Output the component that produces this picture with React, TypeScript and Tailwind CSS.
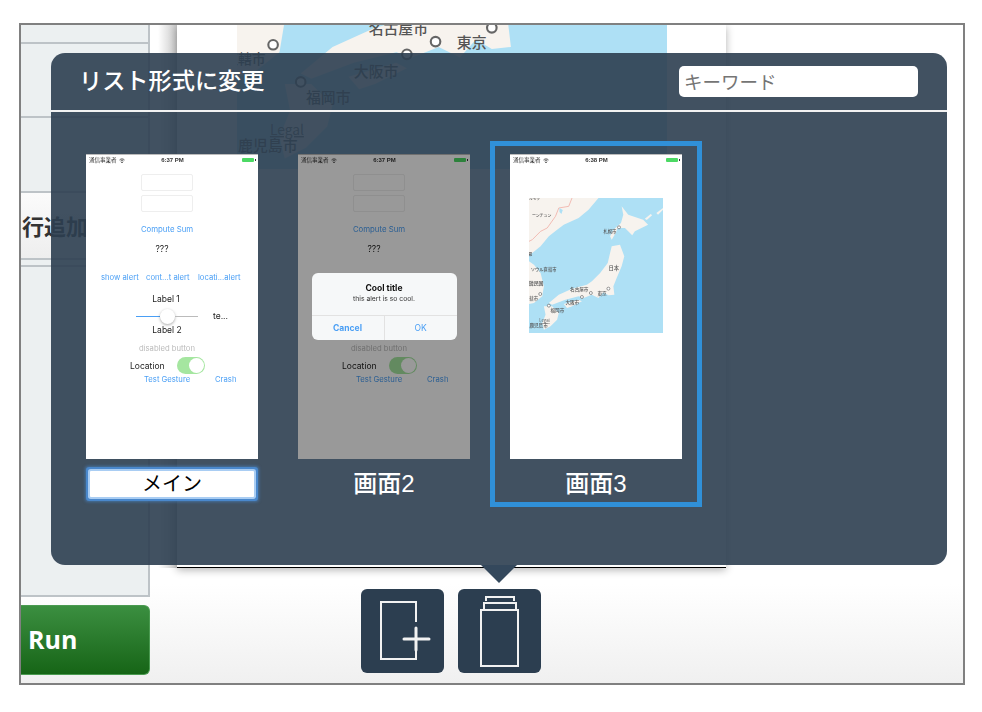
import React from 'react';

const LAND = [
  '0,0 210,0 180,35 150,60 105,80 85,95 60,115 35,145 10,165 0,170',
  '0,190 15,200 35,225 45,265 40,295 15,315 0,318',
  '280,25 300,50 345,65 360,80 320,100 312,112 290,90 268,90 262,105 250,125 245,115 255,95 278,75 285,50',
  '250,145 275,140 288,175 280,205 265,240 255,265 258,290 240,292 225,283 210,300 190,290 165,300 150,295 110,305 70,320 60,315 90,290 130,272 175,260 190,250 215,225 238,195 245,165',
  '105,318 150,305 160,310 130,325 115,330',
  '45,325 70,325 90,345 85,365 65,385 45,395 40,375 50,350',
  '385,45 405,30 405,35 390,50',
  '350,62 368,48 372,52 356,66',
];

const MARKERS = [
  [272, 88],
  [240, 272],
  [187, 285],
  [160, 297],
  [60, 323],
  [34, 288],
];

const LABELS: [string, number, number, number, 'start' | 'end'][] = [
  ['ルモラ', 0, 6, 11, 'start'],
  ['ーンチュン', 68, 58, 12, 'end'],
  ['羅', 10, 175, 12, 'end'],
  ['札幌市', 225, 106, 13, 'start'],
  ['日本', 240, 217, 16, 'start'],
  ['ソウル直轄市', 83, 220, 13, 'end'],
  ['大韓民国', 44, 262, 15, 'end'],
  ['釜山直轄市', 27, 306, 13, 'end'],
  ['東京', 207, 291, 14, 'start'],
  ['名古屋市', 124, 278, 14, 'start'],
  ['大阪市', 110, 318, 14, 'start'],
  ['福岡市', 65, 343, 14, 'start'],
  ['鹿児島市', 57, 388, 14, 'end'],
];

function JapanMap({ className }: { className: string }) {
  return (
    <svg viewBox="0 0 405 405" preserveAspectRatio="none" className={className}>
      <rect width="405" height="405" fill="#aee0f5" />
      {LAND.map((points) => (
        <polygon key={points} points={points} fill="#f7f3ee" />
      ))}
      <polyline
        points="130,0 120,25 90,30 80,55 55,90 35,100 10,125 0,130"
        fill="none"
        stroke="#f0b0a8"
        strokeWidth="2.5"
      />
      <polygon points="92,30 102,36 98,48 92,42" fill="#aee0f5" />
      {LABELS.map(([label, x, y, size, anchor]) => (
        <text key={label} x={x} y={y} fontSize={size} fontWeight="500" textAnchor={anchor} fill="#555">
          {label}
        </text>
      ))}
      <text x="31" y="373" fontSize="13" fill="#666" textDecoration="underline">
        Legal
      </text>
      {MARKERS.map(([x, y]) => (
        <circle key={x} cx={x} cy={y} r="4.5" fill="#fff" stroke="#666" strokeWidth="2" />
      ))}
    </svg>
  );
}

function StatusBar({ time }: { time: string }) {
  return (
    <div className="h-[11px] flex items-center justify-between pl-[3px] pr-[2px] border-t border-[#bbb] text-[5.5px] text-[#333]">
      <div className="flex items-center gap-[2px] w-[60px]">
        <span>通信事業者</span>
        <svg width="6" height="5" viewBox="0 0 12 10" fill="none" stroke="#333" strokeWidth="1.6">
          <path d="M1 4c3-3 7-3 10 0M3 6c2-2 4-2 6 0" />
          <circle cx="6" cy="8.5" r="0.8" fill="#333" />
        </svg>
      </div>
      <span className="text-[6px] font-semibold">{time}</span>
      <div className="flex items-center justify-end gap-[1px] w-[60px]">
        <div className="w-[12px] h-[4px] bg-[#4cd964] rounded-[1px]" />
        <div className="w-[1px] h-[2px] bg-[#333]" />
      </div>
    </div>
  );
}

function MainScreen() {
  const blue = 'text-[#4a9ff5]';
  return (
    <div className="font-['Inter','Noto_Sans_CJK_JP',sans-serif] text-[#222] leading-none whitespace-nowrap">
      <div className="h-[9px]" />
      <div className="h-[17px] w-[52px] ml-[55px] border border-[#eee] rounded-[2px]" />
      <div className="h-[17px] w-[52px] ml-[55px] mt-[4px] border border-[#eee] rounded-[2px]" />
      <div className={`h-[11px] w-[52px] ml-[55px] mt-[12px] pt-[1px] flex items-center justify-center text-[7.8px] ${blue}`}>Compute Sum</div>
      <div className="h-[11px] w-[52px] ml-[50px] mt-[9px] flex items-center justify-center text-[8.5px]">???</div>
      <div className={`h-[10px] mt-[18px] ml-[15px] flex items-center gap-[7px] text-[7.7px] ${blue}`}>
        <span className="w-[38px]">show alert</span>
        <span className="w-[45px]">cont...t alert</span>
        <span>locati...alert</span>
      </div>
      <div className="h-[11px] w-[52px] ml-[54px] mt-[11px] flex items-center justify-center text-[8.5px]">Label 1</div>
      <div className="h-[15px] mt-[4px] ml-[50px] flex items-center">
        <div className="w-[24px] h-[1px] bg-[#4a9ff5]" />
        <div className="w-[15px] h-[15px] rounded-full bg-white shadow-[0_1px_3px_rgba(0,0,0,0.35)]" />
        <div className="w-[23px] h-[1px] bg-[#bbb]" />
        <span className="ml-[15px] text-[8.5px]">te...</span>
      </div>
      <div className="h-[11px] w-[52px] ml-[55px] pt-[1px] flex items-center justify-center text-[8.5px]">Label 2</div>
      <div className="h-[10px] w-[60px] ml-[51px] mt-[9px] flex items-center justify-center text-[7.7px] text-[#bbb]">disabled button</div>
      <div className="h-[17px] mt-[3px] ml-[44px] flex items-center text-[8.5px]">
        <span className="w-[47px] pt-[1px]">Location</span>
        <div className="w-[28px] h-[17px] rounded-full bg-[#a5e6a0] flex justify-end items-center pr-[1px]">
          <div className="w-[15px] h-[15px] rounded-full bg-white" />
        </div>
      </div>
      <div className={`h-[10px] ml-[58px] pt-[1px] flex items-center text-[7.7px] ${blue}`}>
        <span className="w-[71px]">Test Gesture</span>
        <span>Crash</span>
      </div>
    </div>
  );
}

function Thumb({ children, label, selected, focused }: { children: React.ReactNode; label: string; selected?: boolean; focused?: boolean }) {
  return (
    <div className={`w-[212px] h-[366px] border-[5px] px-[15px] pt-[8px] ${selected ? 'border-[#3090d8]' : 'border-transparent'}`}>
      <div className="relative w-[172px] h-[305px] bg-white overflow-hidden blur-[0.4px]">{children}</div>
      <div className="h-[32px] mt-[9px] flex items-center justify-center">
        {focused ? (
          <div className="w-[164px] h-[26px] bg-white flex items-center justify-center text-[20px] text-black rounded-[1px] shadow-[0_0_0_2px_#a9cdf3,0_0_0_4px_#4a88cc,0_0_3px_5px_rgba(74,136,204,0.6)]">
            {label}
          </div>
        ) : (
          <span className="text-[24px] font-medium text-white">{label}</span>
        )}
      </div>
    </div>
  );
}

export default function App() {
  return (
    <div className="w-[982px] h-[712px] bg-white pt-[23px] pl-[19px] font-['Liberation_Sans','Noto_Sans_CJK_JP',sans-serif]">
      <div className="relative w-[946px] h-[662px] border-2 border-[#808080] overflow-hidden flex bg-linear-to-b from-white from-85% to-[#f0f0f0]">
        {/* left panel */}
        <div className="w-[129px] shrink-0">
          <div className="h-[572px] bg-[#ecf0f1] border-r-2 border-b-2 border-[#bdc3c7]">
            <div className="h-[19px] border-b-2 border-[#bdc3c7]" />
            <div className="h-[74px] border-b-2 border-[#bdc3c7]" />
            <div className="h-[75px] border-b-2 border-[#bdc3c7]" />
            <div className="h-[67px] border-b-2 border-[#bdc3c7] bg-linear-to-b from-[#fbfbfb] to-[#eeeeee] flex items-center pl-[1px] pt-[3px] text-[22px] font-bold text-[#333] whitespace-nowrap">
              行追加
            </div>
            <div className="h-[7px] border-b-2 border-[#bdc3c7]" />
          </div>
          <div className="mt-[8px] h-[70px] rounded-r-[6px] border border-l-0 border-[#4a9a50] bg-linear-to-b from-[#3b8f40] to-[#166516] flex items-center pl-[7px] text-[25px] font-bold text-white font-['Open_Sans',sans-serif]">
            Run
          </div>
        </div>

        {/* page */}
        <div className="flex flex-col">
          <div className="flex">
            <div className="w-[27px] h-[543px] bg-linear-to-r from-white from-30% to-[#c8c8c8]" />
            <div className="w-[549px] h-[543px] bg-white overflow-hidden border-b border-black shadow-[0_2px_8px_rgba(0,0,0,0.3)]">
              <JapanMap className="w-[430px] h-[430px] ml-[60px] -mt-[286px] font-['Noto_Sans_CJK_JP',sans-serif]" />
            </div>
          </div>
          <div className="ml-[27px] w-[547px] mt-[21px] flex justify-center gap-[14px]">
            <div className="w-[83px] h-[84px] rounded-[6px] bg-[#2c3e50]">
              <svg width="83" height="84" viewBox="0 0 83 84" fill="none" stroke="#f2f2f2" strokeWidth="2">
                <path d="M55 33V13H20V70H55V62" />
                <path d="M43 50H68M55 39V61" strokeWidth="3" strokeLinecap="round" />
              </svg>
            </div>
            <div className="w-[83px] h-[84px] rounded-[6px] bg-[#2c3e50]">
              <svg width="83" height="84" viewBox="0 0 83 84" fill="none" stroke="#f2f2f2" strokeWidth="2">
                <path d="M23 21H60V77H23Z" />
                <path d="M26 20V14H58V20" />
                <path d="M28 12V8H56V12" />
              </svg>
            </div>
          </div>
        </div>

        {/* screen picker popup */}
        <div className="absolute left-[30px] top-[28px] w-[896px] h-[512px] rounded-[14px] bg-[#2c3e50]/90">
          <div className="h-[57px] flex items-center justify-between pl-[28px] pr-[29px]">
            <span className="text-[23.2px] font-medium text-white">リスト形式に変更</span>
            <input
              placeholder="キーワード"
              className="w-[239px] h-[31px] rounded-[5px] bg-white pl-[5px] pt-[2px] text-[18.5px] outline-none placeholder:text-[#757575]"
            />
          </div>
          <div className="h-[2px] bg-[#f2f2f2]" />
          <div className="flex pl-[15px] pt-[29px]">
            <Thumb label="メイン" focused>
              <StatusBar time="6:37 PM" />
              <MainScreen />
            </Thumb>
            <Thumb label="画面2">
              <StatusBar time="6:37 PM" />
              <MainScreen />
              <div className="absolute inset-0 bg-black/40 flex items-center justify-center font-['Inter',sans-serif]">
                <div className="w-[145px] h-[67px] rounded-[6px] bg-[#f6f8f9] flex flex-col">
                  <div className="h-[43px] flex flex-col items-center pt-[11px] gap-[3px] leading-none border-b border-[#e2e2e2]">
                    <span className="text-[8.5px] font-bold text-[#111]">Cool title</span>
                    <span className="text-[6.8px] text-[#333]">this alert is so cool.</span>
                  </div>
                  <div className="flex-1 flex text-[8.5px] text-[#4a9ff5]">
                    <div className="flex-1 flex items-center justify-center font-bold border-r border-[#e2e2e2]">Cancel</div>
                    <div className="flex-1 flex items-center justify-center">OK</div>
                  </div>
                </div>
              </div>
            </Thumb>
            <Thumb label="画面3" selected>
              <StatusBar time="6:38 PM" />
              <JapanMap className="w-[134px] h-[135px] ml-[19px] mt-[33px] font-['Noto_Sans_CJK_JP',sans-serif]" />
            </Thumb>
          </div>
          {/* arrow */}
          <div className="absolute left-[430px] top-full w-0 h-0 border-x-[18px] border-x-transparent border-t-[18px] border-t-[#34485c]" />
        </div>
      </div>
    </div>
  );
}
